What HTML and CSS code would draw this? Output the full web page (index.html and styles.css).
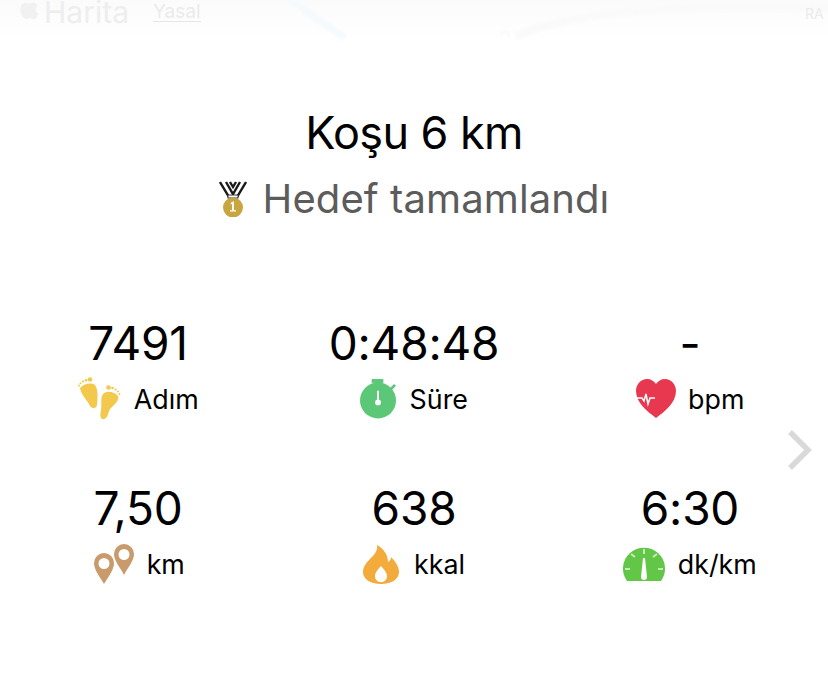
FILE: index.html
```html
<!DOCTYPE html>
<html lang="tr">
<head>
<meta charset="utf-8">
<title>Koşu 6 km</title>
<link rel="stylesheet" href="styles.css">
</head>
<body>
<div class="page">
  <header class="map">
    <svg class="map-lines" viewBox="0 0 828 40" width="828" height="40" aria-hidden="true">
      <path d="M290 0L345 38" stroke="#f5fafd" stroke-width="7" fill="none"/>
      <path d="M515 36C570 14 640 4 828 8" stroke="#fafafa" stroke-width="8" fill="none"/>
      <path d="M501 36a4 4 0 1 1 8 0" stroke="#f6f6f6" stroke-width="1.5" fill="none"/>
    </svg>
    <svg class="map-apple" viewBox="0 0 20 24" width="19" height="22" aria-hidden="true">
      <path d="M14 3c2 0 4 1 5 3-3 2-3 7 1 9-1 3-3 6-5 6-1 0-2-1-4-1s-3 1-4 1C3 21 0 15 0 10c0-5 3-7 6-7 2 0 3 1 4 1s2-1 4-1z" fill="#f1f1f1"/>
    </svg>
    <span class="map-name">Harita</span>
    <span class="map-legal">Yasal</span>
    <span class="map-ra">RA</span>
  </header>

  <section class="heading">
    <h1 class="title">Koşu 6 km</h1>
    <div class="goal">
      <svg class="medal" viewBox="0 0 28 36" width="28" height="36" aria-hidden="true">
        <path d="M1 1l9 15h8l9-15M7 1l7 12 7-12M11 1l3 5 3-5" fill="none" stroke="#1a1a1a" stroke-width="2.4"/>
        <rect x="9" y="14" width="10" height="3" fill="#fff" stroke="#333" stroke-width="1"/>
        <circle cx="14" cy="26.500" r="10" fill="#c9a53f"/>
        <path d="M12 21.500l3-1.200v9h2v1.200h-6v-1.200h2v-6.400l-1.500.5z" fill="#fff"/>
      </svg>
      <span>Hedef tamamlandı</span>
    </div>
  </section>

  <main class="stats">
    <div class="stat">
      <div class="value">7491</div>
      <div class="label">
        <svg viewBox="0 0 44 44" width="44" height="44" aria-hidden="true">
          <g fill="#f2c94c">
            <path d="M3 11C6 7 14 5 18 8C21 12 21 20 20 28C19 32 15 32 13 29C11 24 4 18 3 11z"/>
            <path d="M26 17C30 13 38 15 41 19C43 23 37 28 33 32C31 36 31 41 27 42C23 43 23 38 24 33C25 28 23 21 26 17z"/>
            <circle cx="13" cy="2.500" r="2.300"/><circle cx="9" cy="3.300" r="1.300"/><circle cx="6" cy="4.500" r="1.100"/><circle cx="3.500" cy="6.300" r="1"/><circle cx="2" cy="8.500" r=".9"/>
            <circle cx="31.500" cy="10.500" r="2.300"/><circle cx="35.500" cy="11" r="1.300"/><circle cx="38.500" cy="12.500" r="1.100"/><circle cx="41" cy="14.500" r="1"/><circle cx="42.500" cy="17" r=".9"/>
          </g>
        </svg>
        <span>Adım</span>
      </div>
    </div>
    <div class="stat">
      <div class="value">0:48:48</div>
      <div class="label">
        <svg viewBox="0 0 38 41" width="37" height="40" aria-hidden="true">
          <rect x="12" y="0" width="12" height="4" fill="#5cc877"/>
          <rect x="15" y="3" width="6" height="4" fill="#5cc877"/>
          <path d="M29 11l6-6 2 2-6 6z" fill="#5cc877"/>
          <circle cx="18.500" cy="22" r="18.500" fill="#5cc877"/>
          <rect x="17.500" y="12" width="2" height="11" fill="#fff"/>
          <circle cx="18.500" cy="24" r="3" fill="#fff"/>
        </svg>
        <span>Süre</span>
      </div>
    </div>
    <div class="stat">
      <div class="value">-</div>
      <div class="label">
        <svg viewBox="0 0 40 40" width="40" height="40" aria-hidden="true">
          <path d="M20 39C12 33 0 24 0 12 0 5 5 0 11 0c4 0 7 2 9 5 2-3 5-5 9-5 6 0 11 5 11 12 0 12-12 21-20 27z" fill="#e8384f"/>
          <path d="M0 19h6l2 3 2-7 2 10 2-6h5" fill="none" stroke="#fff" stroke-width="1.500"/>
        </svg>
        <span>bpm</span>
      </div>
    </div>
    <div class="stat">
      <div class="value">7,50</div>
      <div class="label label-km">
        <svg viewBox="0 0 40 40" width="40" height="40" aria-hidden="true">
          <path fill-rule="evenodd" d="M10 9a10 10 0 0 1 10 10c0 7-6 14-10 21C6 33 0 26 0 19A10 10 0 0 1 10 9zm0 5a5.500 5.500 0 1 0 0 11 5.500 5.500 0 0 0 0-11z" fill="#c99a6b"/>
          <path fill-rule="evenodd" d="M30 0a10 10 0 0 1 10 10c0 7-6 13-10 21-4-8-10-14-10-21A10 10 0 0 1 30 0zm0 5a5.500 5.500 0 1 0 0 11 5.500 5.500 0 0 0 0-11z" fill="#c99a6b"/>
        </svg>
        <span>km</span>
      </div>
    </div>
    <div class="stat">
      <div class="value">638</div>
      <div class="label label-wide">
        <svg viewBox="0 0 36 39" width="36" height="39" aria-hidden="true">
          <path fill-rule="evenodd" d="M14 0c7 4 11 10 11 17 2-1 3-3 3-5 5 5 8 10 8 15 0 7-7 12-18 12S0 34 0 27c0-5 3-9 7-13 4-4 8-8 7-14zm4 21c-3 3-6 7-6 10 0 4 3 6 6 6s6-2 6-6c0-3-3-7-6-10z" fill="#f3ab3c"/>
        </svg>
        <span>kkal</span>
      </div>
    </div>
    <div class="stat">
      <div class="value">6:30</div>
      <div class="label">
        <svg viewBox="0 0 42 36" width="42" height="36" aria-hidden="true">
          <path d="M4 35A21 21 0 1 1 38 35z" fill="#62c747"/>
          <path d="M20 12h2l2 19a3 3 0 0 1-6 0z" fill="#fff"/>
          <path d="M21 3v5M8 8l4 3M34 8l-4 3M2 23h5M40 23h-5" stroke="#c6eab9" stroke-width="2" fill="none"/>
        </svg>
        <span>dk/km</span>
      </div>
    </div>
  </main>

  <svg class="chevron" viewBox="0 0 26 42" width="26" height="42" aria-hidden="true">
    <path d="M3 3l18 18L3 39" fill="none" stroke="#d9d9d9" stroke-width="5.500"/>
  </svg>
</div>
</body>
</html>
```

FILE: styles.css
```css
* { box-sizing: border-box; }
html, body { margin: 0; background: #fff; }
body { font-family: Inter, "Liberation Sans", sans-serif; color: #000; }
.page { position: relative; width: 828px; height: 681px; overflow: hidden; }

.map { position: relative; height: 40px; background: linear-gradient(#fbfbfb, #fff); }
.map-lines { position: absolute; left: 0; top: 0; filter: blur(1px); }
.map-apple { position: absolute; left: 20px; top: 0; }
.map-name { position: absolute; left: 44px; top: 0; font-size: 30px; line-height: 24px; color: #eeeeee; }
.map-legal { position: absolute; left: 153px; top: 3px; font-size: 19px; line-height: 18px; color: #ebebeb; border-bottom: 1px solid #e6e6e6; }
.map-ra { position: absolute; left: 805px; top: 5px; font-size: 14px; line-height: 17px; color: #ebebeb; }

.heading { display: flex; flex-direction: column; align-items: center; padding-top: 65px; }
.title { margin: 0; font-size: 45px; line-height: 56px; font-weight: 400; letter-spacing: -0.6px; }
.goal { display: flex; align-items: center; gap: 16px; margin-top: 14px; font-size: 40px; line-height: 48px; letter-spacing: 0.1px; color: #5c5c5c; }
.medal { flex: none; }

.stats { display: grid; grid-template-columns: repeat(3, 1fr); grid-auto-rows: 165px; margin-top: 92px; }
.stat { display: flex; flex-direction: column; align-items: center; }
.value { font-size: 46px; line-height: 56px; letter-spacing: -0.2px; }
.label { display: flex; align-items: center; justify-content: center; gap: 12.500px; height: 44px; margin-top: 6px; font-size: 26.800px; }
.label svg { flex: none; }
.label-km { padding-left: 3px; }
.label-wide { gap: 15px; }

.chevron { position: absolute; left: 787px; top: 429px; }
```
